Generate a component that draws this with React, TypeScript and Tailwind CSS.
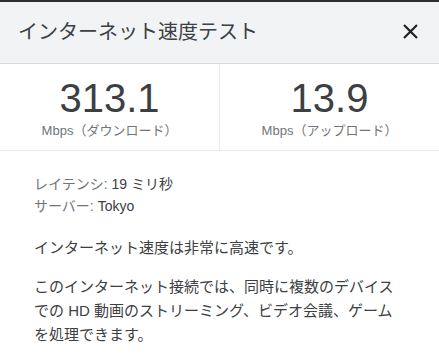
import React from "react";

export default function App() {
  const font = { fontFamily: '"Liberation Sans", "Noto Sans CJK JP", sans-serif' };
  return (
    <div className="w-[439px] h-[358px] bg-white overflow-hidden" style={font}>
      <div className="h-[2px] bg-[#2e2e2e]" />
      <div className="h-[62px] bg-[#f1f3f4] border-b border-[#dadce0] flex items-center justify-between pl-[18px] pr-[20px]">
        <div className="text-[20px] text-[#3c4043] leading-none pb-[2px]">インターネット速度テスト</div>
        <svg width="17" height="17" viewBox="0 0 17 17" className="mb-[2px]">
          <path d="M2 2 L15 15 M15 2 L2 15" stroke="#202124" strokeWidth="2.2" />
        </svg>
      </div>
      <div className="flex h-[87px] border-b border-[#e8eaed]">
        <div className="w-[220px] border-r border-[#e8eaed] flex flex-col items-center pt-[16px]">
          <div className="text-[40px] leading-[37px] text-[#3c4043]">313.1</div>
          <div className="text-[13px] text-[#70757a] mt-[4px]">Mbps（ダウンロード）</div>
        </div>
        <div className="flex-1 flex flex-col items-center pt-[16px]">
          <div className="text-[40px] leading-[37px] text-[#3c4043]">13.9</div>
          <div className="text-[13px] text-[#70757a] mt-[4px]">Mbps（アップロード）</div>
        </div>
      </div>
      <div className="px-[34px] pt-[22px]">
        <div className="text-[14px] leading-[22px]">
          <div><span className="text-[#70757a]">レイテンシ:</span> <span className="text-[#3c4043]">19 ミリ秒</span></div>
          <div><span className="text-[#70757a]">サーバー:</span> <span className="text-[#3c4043]">Tokyo</span></div>
        </div>
        <div className="text-[15px] leading-[24px] text-[#3c4043] mt-[19px]">インターネット速度は非常に高速です。</div>
        <div className="text-[15px] leading-[24px] text-[#3c4043] mt-[15px]">
          このインターネット接続では、同時に複数のデバイスでの HD 動画のストリーミング、ビデオ会議、ゲームを処理できます。
        </div>
      </div>
    </div>
  );
}
